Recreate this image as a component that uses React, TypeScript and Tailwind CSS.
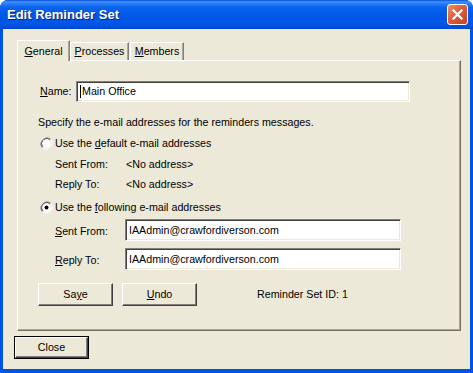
import React from 'react';

const font = { fontFamily: '"Liberation Sans", Arial, sans-serif' };

const sunken =
  'bg-white border-t border-l border-t-[#808080] border-l-[#808080] border-b border-r border-b-white border-r-white shadow-[inset_1px_1px_0_#404040,inset_-1px_-1px_0_#ECE9D8]';

const raised =
  'bg-[#ECE9D8] border-t border-l border-t-white border-l-white border-b border-r border-b-[#404040] border-r-[#404040] shadow-[inset_-1px_-1px_0_#808080]';

const Radio: React.FC<{ checked?: boolean }> = ({ checked }) => (
  <svg width="13" height="13" viewBox="0 0 13 13" className="shrink-0">
    <circle cx="6.5" cy="6.5" r="6" fill="#ECE9D8" />
    <path d="M2.3 10.7 A6 6 0 0 1 10.7 2.3" stroke="#808080" strokeWidth="1" fill="none" />
    <path d="M3 9.9 A4.9 4.9 0 0 1 9.9 3" stroke="#404040" strokeWidth="1" fill="none" />
    <path d="M10.7 2.3 A6 6 0 0 1 2.3 10.7" stroke="#FFFFFF" strokeWidth="1" fill="none" />
    <circle cx="6.5" cy="6.5" r="4.2" fill="#FFFFFF" />
    {checked && <circle cx="6.5" cy="6.5" r="2" fill="#000" />}
  </svg>
);

const Tab: React.FC<{ label: React.ReactNode; active?: boolean; width: string }> = ({ label, active, width }) => (
  <div
    className={`${width} flex items-center justify-center border-t border-l border-t-white border-l-white border-r border-r-[#808080] shadow-[inset_-1px_0_0_#ACA899] ${
      active ? 'h-[21px] -mb-px bg-[#ECE9D8] relative z-10' : 'h-[18px] bg-[#ECE9D8]'
    }`}
  >
    {label}
  </div>
);

export default function App() {
  return (
    <div style={font} className="w-[473px] h-[373px] bg-[#0054E3] rounded-t-[8px] flex flex-col text-[10.7px] text-black leading-none">
      {/* Title bar */}
      <div className="h-[29px] shrink-0 rounded-t-[8px] flex items-center justify-between pl-[7px] pr-[5px] bg-[linear-gradient(to_bottom,#0A4BD8_0%,#3C8EF8_6%,#2A80F6_12%,#0A62EE_25%,#0058E8_55%,#0055E5_85%,#0046CE_100%)]">
        <span className="text-white font-bold text-[13px] [text-shadow:1px_1px_0_#0A1E8A]">Edit Reminder Set</span>
        <div className="w-[21px] h-[21px] rounded-[3px] border border-white bg-[linear-gradient(135deg,#F0926F_0%,#E2603C_40%,#C8431E_100%)] flex items-center justify-center">
          <svg width="11" height="11" viewBox="0 0 11 11">
            <path d="M1.5 1.5 L9.5 9.5 M9.5 1.5 L1.5 9.5" stroke="#fff" strokeWidth="2.2" strokeLinecap="square" />
          </svg>
        </div>
      </div>

      {/* Client area */}
      <div className="flex-1 mx-[3px] mb-[4px] bg-[#ECE9D8] flex flex-col">
        {/* Tabs */}
        <div className="flex items-end ml-[14px] mt-[11px] h-[20px]">
          <Tab width="w-[53px]" active label={<span><u>G</u>eneral</span>} />
          <Tab width="w-[59px]" label={<span><u>P</u>rocesses</span>} />
          <div className="w-[1px]" />
          <Tab width="w-[54px]" label={<span><u>M</u>embers</span>} />
        </div>

        {/* Panel */}
        <div className="ml-[14px] w-[444px] h-[271px] border-t border-l border-t-white border-l-white border-r border-b border-r-[#716F64] border-b-[#716F64] shadow-[inset_-1px_-1px_0_#ACA899] pl-[20px] pt-[20px] flex flex-col">
          <div className="flex items-center h-[21px]">
            <span className="ml-[2px] w-[36px]"><u>N</u>ame:</span>
            <div className={`${sunken} w-[334px] h-[21px] flex items-center pl-[3px]`}>
              <span className="w-px h-[13px] bg-black mr-px" />
              <span>Main Office</span>
            </div>
          </div>

          <div className="mt-[12px] h-[16px] flex items-center">
            Specify the e-mail addresses for the reminders messages.
          </div>

          <div className="mt-[5px] h-[16px] flex items-center ml-[2px]">
            <Radio />
            <span className="ml-[2px]">Use the <u>d</u>efault e-mail addresses</span>
          </div>

          <div className="mt-[5px] h-[16px] flex items-center pl-[17px]">
            <span className="w-[71px]">Sent From:</span>
            <span>&lt;No address&gt;</span>
          </div>

          <div className="mt-[4px] h-[16px] flex items-center pl-[17px]">
            <span className="w-[71px]">Reply To:</span>
            <span>&lt;No address&gt;</span>
          </div>

          <div className="mt-[7px] h-[16px] flex items-center ml-[2px]">
            <Radio checked />
            <span className="ml-[2px]">Use the <u>f</u>ollowing e-mail addresses</span>
          </div>

          <div className="mt-[4px] h-[22px] flex items-center pl-[17px]">
            <span className="w-[70px] pt-[2px]"><u>S</u>ent From:</span>
            <div className={`${sunken} w-[276px] h-[22px] flex items-center pl-[3px]`}>
              IAAdmin@crawfordiverson.com
            </div>
          </div>

          <div className="mt-[7px] h-[22px] flex items-center pl-[17px]">
            <span className="w-[70px] pt-[2px]"><u>R</u>eply To:</span>
            <div className={`${sunken} w-[276px] h-[22px] flex items-center pl-[3px]`}>
              IAAdmin@crawfordiverson.com
            </div>
          </div>

          <div className="mt-[13px] h-[23px] flex items-center">
            <button className={`${raised} w-[75px] h-[23px] flex items-center justify-center`}>
              <span>Sa<u>y</u>e</span>
            </button>
            <button className={`${raised} ml-[9px] w-[75px] h-[23px] flex items-center justify-center`}>
              <span><u>U</u>ndo</span>
            </button>
            <span className="ml-[60px]">Reminder Set ID: 1</span>
          </div>
        </div>

        {/* Close */}
        <div className="mt-[5px] ml-[11px]">
          <div className="w-[75px] h-[23px] border border-black">
            <button className={`${raised} w-full h-full flex items-center justify-center`}>Close</button>
          </div>
        </div>
      </div>
    </div>
  );
}
